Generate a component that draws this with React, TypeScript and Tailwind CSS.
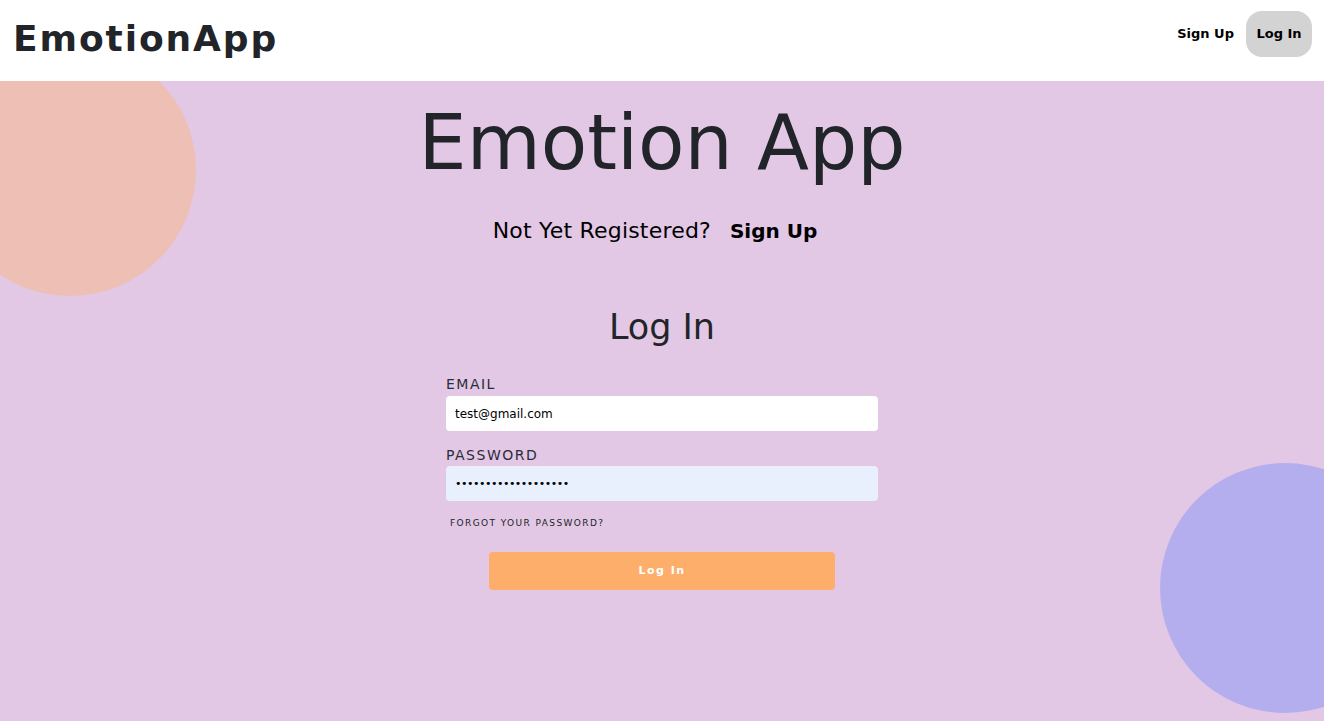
import React from "react";

const font = { fontFamily: '"DejaVu Sans", "Noto Sans", sans-serif' };

const Header: React.FC = () => {
  return (
    <header className="h-[81px] bg-white flex items-start justify-between pl-[13px] pr-3">
      <h1 className="mt-[21px] text-[36px] font-bold tracking-[1.9px] text-[#212529] leading-none">EmotionApp</h1>
      <nav className="mt-[11px] flex items-center gap-3">
        <a className="text-[13px] font-bold text-black">Sign Up</a>
        <button className="h-[46px] w-[66px] rounded-2xl bg-[#d3d3d3] text-[13px] font-bold text-black">Log In</button>
      </nav>
    </header>
  );
};

const LoginForm: React.FC = () => {
  return (
    <form className="w-[432px] flex flex-col">
      <label className="text-[14px] tracking-[1.5px] text-[#2b2b3a] font-normal leading-none">EMAIL</label>
      <input
        className="mt-[5px] h-[35px] rounded bg-white px-[9px] text-[12px] text-black outline-none"
        defaultValue="test@gmail.com"
      />
      <label className="text-[14px] tracking-[1.5px] text-[#2b2b3a] font-normal leading-none mt-[17px]">PASSWORD</label>
      <input
        type="password"
        className="mt-[4px] h-[35px] rounded bg-[#e8f0fe] px-[9px] text-[11px] tracking-[-0.5px] text-black outline-none"
        defaultValue="testpassword1234567"
      />
      <a className="mt-[18px] ml-1 text-[9px] font-medium tracking-[1.4px] text-[#212529] leading-none">FORGOT YOUR PASSWORD?</a>
      <div className="flex justify-center mt-[24px]">
        <button
          type="button"
          className="w-[346px] h-[38px] rounded bg-[#fdae6b] text-white text-[11px] font-bold tracking-[1.5px]"
        >
          Log In
        </button>
      </div>
    </form>
  );
};

export default function App() {
  return (
    <div style={font} className="h-[721px] flex flex-col overflow-hidden">
      <Header />
      <main className="relative flex-1 bg-[#e2c8e4] overflow-hidden flex flex-col items-center">
        <div className="absolute -left-[56px] -top-[37px] w-[252px] h-[252px] rounded-full bg-[#eebfb5]" />
        <div className="absolute left-[1160px] top-[382px] w-[250px] h-[250px] rounded-full bg-[#b5aeee]" />
        <div className="relative flex flex-col items-center">
          <h2 className="text-[76px] leading-none text-[#212529] mt-[24px]">Emotion App</h2>
          <p className="mt-[33px] pr-[14px] text-black flex items-baseline gap-[19px]">
            <span className="text-[22px] tracking-[0.2px]">Not Yet Registered?</span>
            <a className="text-[20px] font-bold">Sign Up</a>
          </p>
          <h3 className="mt-[63px] text-[35px] text-[#212529] leading-none">Log In</h3>
          <div className="mt-[32px]">
            <LoginForm />
          </div>
        </div>
      </main>
    </div>
  );
}
